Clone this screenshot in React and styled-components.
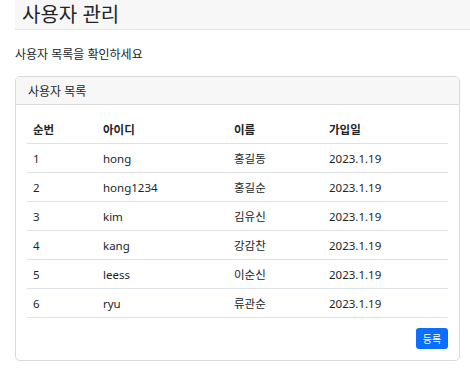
import React from 'react';
import styled, { createGlobalStyle } from 'styled-components';

const GlobalStyle = createGlobalStyle`
  body {
    margin: 0;
    background: #fff;
    color: #212529;
    font-family: "Noto Sans", "Noto Sans CJK KR", sans-serif;
  }
`;

const Page = styled.div`
  padding-left: 15px;
`;

const TitleBar = styled.div`
  height: 30px;
  display: flex;
  align-items: center;
  padding-left: 7px;
  background: #f7f7f7;
  border-bottom: 1px solid #e6e6e6;
  box-sizing: border-box;
`;

const Title = styled.h1`
  margin: 0;
  font-size: 20px;
  font-weight: 400;
  line-height: 1;
  color: #212529;
`;

const Content = styled.div`
  padding-right: 10px;
`;

const Lead = styled.p`
  margin: 17px 0 13px;
  font-size: 12px;
  line-height: 16px;
`;

const Card = styled.div`
  border: 1px solid #d9d9d9;
  border-radius: 5px;
  overflow: hidden;
`;

const CardHeader = styled.div`
  height: 27px;
  display: flex;
  align-items: center;
  padding: 0 12px;
  background: #f7f7f7;
  border-bottom: 1px solid #d9d9d9;
  font-size: 12px;
`;

const CardBody = styled.div`
  padding: 10px 11px 11px;
`;

const Table = styled.table`
  width: 100%;
  table-layout: fixed;
  border-collapse: collapse;
  font-size: 11.5px;
`;

const Th = styled.th`
  width: ${(p) => (p.$w ? `${p.$w - 12}px` : 'auto')};
  height: 28px;
  padding: 0 6px;
  text-align: left;
  font-weight: 700;
  border-bottom: 1px solid #dee2e6;
`;

const Td = styled.td`
  height: 28px;
  padding: 0 6px;
  border-bottom: 1px solid #dee2e6;
`;

const Actions = styled.div`
  display: flex;
  justify-content: flex-end;
  margin-top: 10px;
`;

const Button = styled.button`
  width: 32px;
  height: 21px;
  padding: 0;
  border: none;
  border-radius: 3px;
  background: #0d6efd;
  color: #fff;
  font-family: inherit;
  font-size: 10px;
`;

const users = [
  { id: 1, userId: 'hong', name: '홍길동', date: '2023.1.19' },
  { id: 2, userId: 'hong1234', name: '홍길순', date: '2023.1.19' },
  { id: 3, userId: 'kim', name: '김유신', date: '2023.1.19' },
  { id: 4, userId: 'kang', name: '강감찬', date: '2023.1.19' },
  { id: 5, userId: 'leess', name: '이순신', date: '2023.1.19' },
  { id: 6, userId: 'ryu', name: '류관순', date: '2023.1.19' },
];

export default function App() {
  return (
    <Page>
      <GlobalStyle />
      <TitleBar>
        <Title>사용자 관리</Title>
      </TitleBar>
      <Content>
        <Lead>사용자 목록을 확인하세요</Lead>
        <Card>
          <CardHeader>사용자 목록</CardHeader>
          <CardBody>
            <Table>
              <thead>
                <tr>
                  <Th $w={70}>순번</Th>
                  <Th $w={131}>아이디</Th>
                  <Th $w={95}>이름</Th>
                  <Th>가입일</Th>
                </tr>
              </thead>
              <tbody>
                {users.map((u) => (
                  <tr key={u.id}>
                    <Td>{u.id}</Td>
                    <Td>{u.userId}</Td>
                    <Td>{u.name}</Td>
                    <Td>{u.date}</Td>
                  </tr>
                ))}
              </tbody>
            </Table>
            <Actions>
              <Button>등록</Button>
            </Actions>
          </CardBody>
        </Card>
      </Content>
    </Page>
  );
}
